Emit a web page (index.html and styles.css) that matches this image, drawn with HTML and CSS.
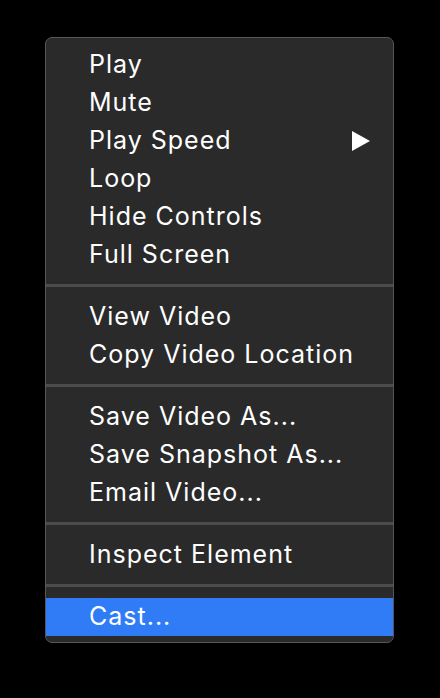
FILE: index.html
```html
<!DOCTYPE html>
<html>
<head>
<meta charset="utf-8">
<link rel="stylesheet" href="styles.css">
</head>
<body>
<div class="menu">
  <div class="item">Play</div>
  <div class="item">Mute</div>
  <div class="item has-sub">Play Speed<span class="arrow"></span></div>
  <div class="item">Loop</div>
  <div class="item">Hide Controls</div>
  <div class="item">Full Screen</div>
  <div class="sep"></div>
  <div class="item">View Video</div>
  <div class="item">Copy Video Location</div>
  <div class="sep"></div>
  <div class="item">Save Video As...</div>
  <div class="item">Save Snapshot As...</div>
  <div class="item">Email Video...</div>
  <div class="sep"></div>
  <div class="item">Inspect Element</div>
  <div class="sep"></div>
  <div class="item active">Cast...</div>
</div>
</body>
</html>
```
FILE: styles.css
```css
html, body {
  margin: 0;
  padding: 0;
  background: #000;
}
body {
  width: 440px;
  height: 698px;
  padding-top: 37px;
  padding-left: 45px;
  box-sizing: border-box;
  font-family: Inter, "Liberation Sans", sans-serif;
}
.menu {
  width: 349px;
  box-sizing: border-box;
  background: #2a2a2a;
  border: 1px solid #565656;
  border-radius: 7px;
  padding: 8px 0 6px;
  overflow: hidden;
}
.item {
  height: 38px;
  line-height: 36px;
  padding-left: 43px;
  color: #ffffff;
  font-size: 25px;
  letter-spacing: 1px;
  position: relative;
  white-space: nowrap;
}
.item.active {
  background: #2f7cf6;
}
.arrow {
  position: absolute;
  right: 23px;
  top: 9px;
  width: 0;
  height: 0;
  border-top: 10px solid transparent;
  border-bottom: 10px solid transparent;
  border-left: 18px solid #fff;
}
.sep {
  height: 3px;
  background: #4c4c4c;
  margin: 10px 0 11px;
}
```
